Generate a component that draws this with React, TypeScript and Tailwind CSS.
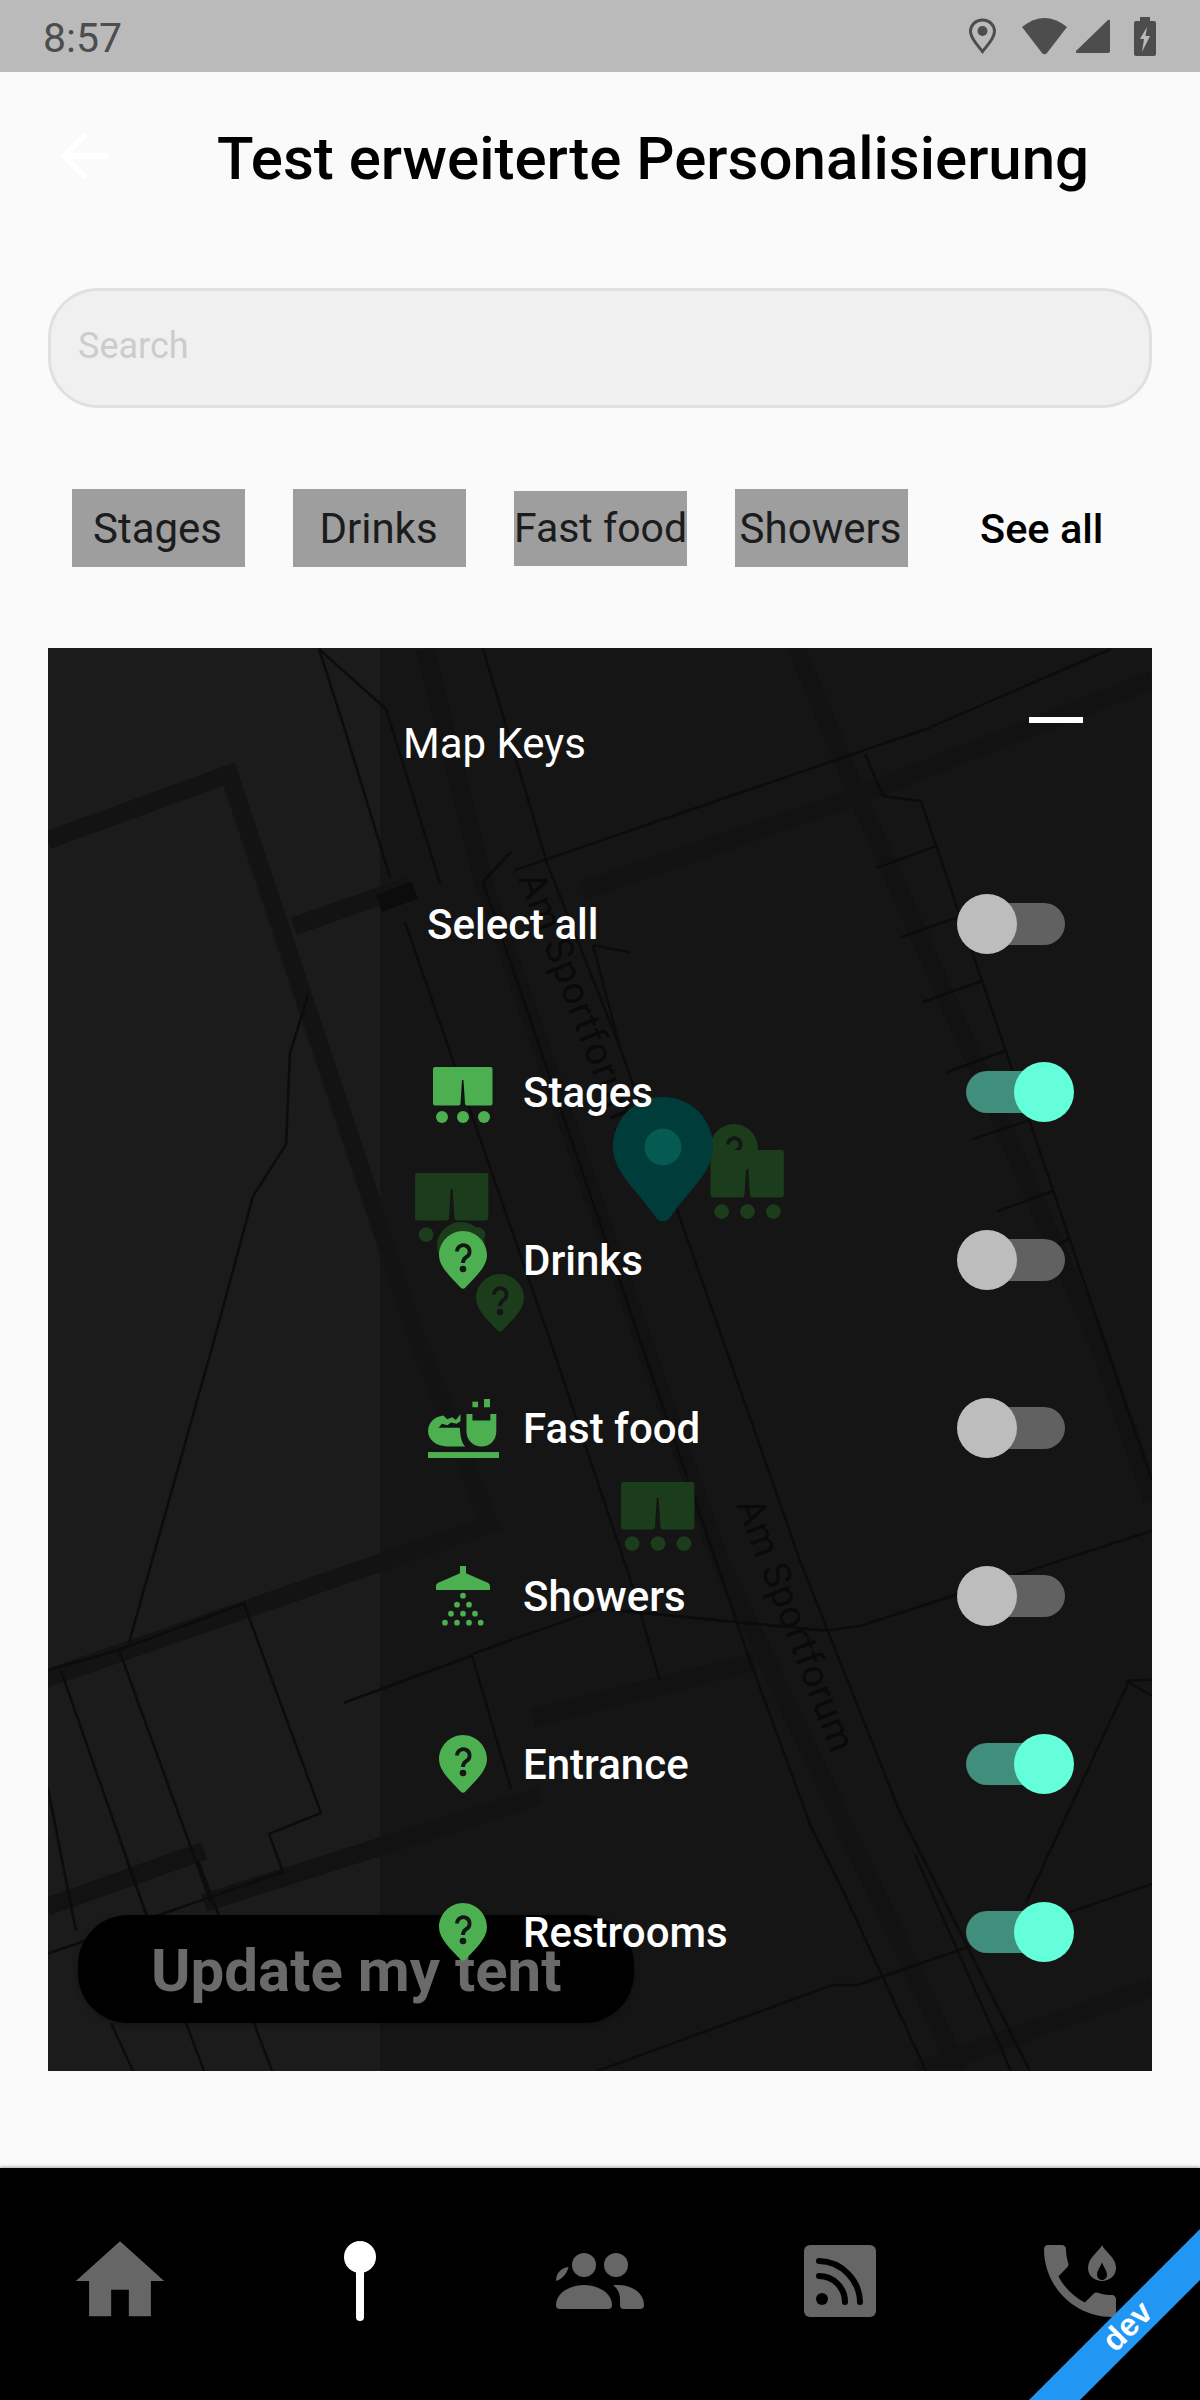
import React from "react";

const thin: string[] = [
  "319,649 386,709 440,883", "319,649 344,727 390,877", "483,649 547,863 620,1047 730,1360 800,1560 900,1812 1030,2070",
  "515,870 926,729 1111,649", "483,881 511,852", "865,754 883,796 921,801", "921,801 1104,1340 1152,1480",
  "876,868 936,846", "901,937 958,917", "922,1002 981,981", "947,1072 1004,1051", "972,1139 1029,1120", "997,1211 1052,1191", "1018,1269 1069,1238",
  "405,922 557,1360 633,1587 660,1680", "483,882 647,1360 750,1660 811,1826 844,1892 926,2070", "483,882 503,860", "593,945 630,952", "593,945 620,1047",
  "308,995 290,1053 286,1144 253,1196 214,1340 129,1642",
  "344,1702 472,1655 511,1788", "473,1653 600,1608 826,1630", "600,1608 826,1630 861,1625 1152,1530",
  "47,1670 119,1649 244,1603 321,1812 269,1833 283,1871 47,1953", "119,1649 211,1902", "61,1670 147,1916", "48,1788 76,1930",
  "111,2022 133,2070", "186,2022 204,2070", "254,2022 272,2070", "127,1860 147,1915", "198,1860 219,1915",
  "915,1854 1011,2070", "1129,1680 1026,1902", "1126,1680 1152,1695", "1126,1680 1152,1679",
  "597,2070 833,1984 858,1984 1152,1883",
];
const thickLeft: string[] = [
  "48,840 229,774 418,1340 490,1524 40,1680", "294,926 411,885",
];
const thickRight: string[] = [
  "583,890 833,805 1152,680",
  "425,649 483,881 720,1560 960,2070", "797,649 854,787 1097,1340 1152,1500",
  "204,1902 540,1795", "533,1717 754,1661", "1152,1986 918,2070", "47,1906 204,1850",
];

function MapLayer() {
  return (
    <svg className="absolute inset-0 h-full w-full" viewBox="48 648 1104 1422" preserveAspectRatio="none">
      <rect x="48" y="648" width="332" height="1422" fill="#1b1b1b" />
      <rect x="380" y="648" width="772" height="1422" fill="#151515" />
      {thickRight.map((p) => (
        <polyline key={p} points={p} fill="none" stroke="#121212" strokeWidth="18" />
      ))}
      {thickLeft.map((p) => (
        <polyline key={p} points={p} fill="none" stroke="#131313" strokeWidth="18" />
      ))}
      <line x1="379" y1="903" x2="415" y2="890" stroke="#0c0c0c" strokeWidth="18" />
      {thin.map((p) => (
        <polyline key={p} points={p} fill="none" stroke="#0c0c0c" strokeWidth="2.500" />
      ))}
      <text transform="translate(518,878) rotate(69)" fontFamily="Roboto, sans-serif" fontSize="38" letterSpacing="1" fill="#0a0a0a">Am Sportforum</text>
      <text transform="translate(736,1504) rotate(69)" fontFamily="Roboto, sans-serif" fontSize="38" letterSpacing="0.5" fill="#0a0a0a">Am Sportforum</text>
    </svg>
  );
}

function StageIcon({ className, color }: { className: string; color: string }) {
  return (
    <svg className={className} viewBox="0 0 60 56" fill={color}>
      <path d="M2 0H57.5a2 2 0 0 1 2 2V36.5a2 2 0 0 1-2 2H34a2 2 0 0 1-2-2L30.5 13H29L27.5 36.5a2 2 0 0 1-2 2H2a2 2 0 0 1-2-2V2a2 2 0 0 1 2-2z" />
      <circle cx="9" cy="50" r="6" />
      <circle cx="30" cy="50" r="6" />
      <circle cx="51" cy="50" r="6" />
    </svg>
  );
}

function QuestionPin({ className, color, mark }: { className: string; color: string; mark: string }) {
  return (
    <svg className={className} viewBox="0 0 48 58">
      <path fill={color} d="M24 0C37 0 48 11 48 24C48 36 36 46 26 57Q24 58.5 22 57C12 46 0 36 0 24C0 11 11 0 24 0Z" />
      <path fill="none" stroke={mark} strokeWidth="3.8" d="M18 20.5a6.3 6.3 0 1 1 9.5 5.4c-2.400 1.500-3.500 2.900-3.500 6" />
      <circle cx="24" cy="38" r="3.300" fill={mark} />
    </svg>
  );
}

function FoodIcon() {
  return (
    <svg className="h-[59px] w-[71px]" viewBox="22 27 214 178" fill="#4caf50">
      <rect x="22" y="187" width="214" height="18" />
      <rect x="156" y="35" width="17" height="17" />
      <rect x="191" y="27" width="18" height="25" />
      <path d="M138 72H156V92H210V72H228V125C228 153 207 170 184 170C160 170 138 153 138 125Z" />
      <path d="M22 125C22 100 40 80 68 77L80 88L95 82L106 90L120 72V94L108 102L92 98L80 106L64 102L54 114H118C119 138 123 160 134 170H80C48 170 22 150 22 125Z" />
    </svg>
  );
}

function ShowerIcon() {
  const dots = [[249, 709], [231, 736], [267, 736], [213, 763], [249, 763], [285, 763], [195, 790], [231, 790], [267, 790], [302, 790]];
  return (
    <svg className="h-[60px] w-[54px]" viewBox="168 620 162 180" fill="#4caf50">
      <path d="M240 620H258V642L318 668Q330 672 330 680V692H168V680Q168 672 180 668L240 642Z" />
      {dots.map(([x, y]) => (
        <circle key={`${x}-${y}`} cx={x} cy={y} r="8.500" />
      ))}
    </svg>
  );
}

function Toggle({ on }: { on: boolean }) {
  return (
    <div className="relative h-[60px] w-[117px]">
      <div className={`absolute left-[9px] top-[9px] h-[42px] w-[99px] rounded-full ${on ? "bg-[#3f8f7c]" : "bg-[#616161]"}`} />
      <div className={`absolute top-0 h-[60px] w-[60px] rounded-full ${on ? "left-[57px] bg-[#64ffda]" : "left-0 bg-[#bdbdbd]"}`} />
    </div>
  );
}

function KeyRow({ icon, label, on }: { icon: React.ReactNode; label: string; on: boolean }) {
  return (
    <div className="flex h-[168px] items-center justify-between">
      <div className="flex items-center gap-[24px]">
        <div className="flex w-[72px] justify-center">{icon}</div>
        <span className="text-[42px] font-medium text-white">{label}</span>
      </div>
      <Toggle on={on} />
    </div>
  );
}

const stageI = <StageIcon className="h-[56px] w-[60px] translate-y-[3px]" color="#4caf50" />;
const pinI = <QuestionPin className="h-[58px] w-[48px]" color="#4caf50" mark="#161616" />;

function Chip({ label, small }: { label: string; small?: boolean }) {
  return (
    <div className={`flex w-[173px] items-center justify-center whitespace-nowrap bg-[#9e9e9e] text-[#1c1c1c] ${small ? "h-[75px] pt-[2px] text-[41px]" : "h-[78px] pr-[2px] text-[42px]"}`}>
      {label}
    </div>
  );
}

export default function App() {
  return (
    <div className="relative flex h-[2400px] w-[1200px] flex-col overflow-hidden bg-[#fafafa] font-['Roboto',sans-serif]">
      {/* status bar */}
      <div className="flex h-[72px] shrink-0 items-center justify-between bg-[#bababa] pl-[43px] pr-[44px] text-[#4d4d4d]">
        <span className="pt-[5px] text-[41px] leading-none">8:57</span>
        <div className="flex items-center">
          <svg className="h-[36px] w-[27px]" viewBox="0 0 27 36" fill="none">
            <path stroke="#4d4d4d" strokeWidth="3" d="M13.500 2C20.500 2 25.500 7 25.500 13.500C25.500 20.500 18.500 27 13.500 33.500C8.500 27 1.500 20.500 1.500 13.500C1.500 7 6.500 2 13.500 2Z" />
            <circle cx="13.500" cy="13" r="5" fill="#4d4d4d" />
          </svg>
          <svg className="ml-[26px] h-[37px] w-[45px]" viewBox="0 0 45 37" fill="#4d4d4d">
            <path d="M0 9Q22.500 -9 45 9L25 35Q22.500 37.500 20 35Z" />
          </svg>
          <svg className="ml-[9px] h-[34px] w-[34px]" viewBox="0 0 34 34" fill="#4d4d4d">
            <path d="M0 32L32 1Q34 0 34 2V32Q34 34 32 34H2Q-1 34 0 32Z" />
          </svg>
          <svg className="ml-[24px] h-[39px] w-[22px]" viewBox="0 0 22 39">
            <path fill="#4d4d4d" d="M6 0H16V4H20Q22 4 22 6V37Q22 39 20 39H2Q0 39 0 37V6Q0 4 2 4H6Z" />
            <path fill="#bababa" d="M13 10L6 22H10L8 35L16 19H11.500Z" />
          </svg>
        </div>
      </div>

      {/* header */}
      <div className="flex h-[168px] shrink-0 items-center">
        <svg className="ml-[48px] h-[72px] w-[72px]" viewBox="0 0 24 24" fill="#ffffff">
          <path d="M20 11H7.830l5.590-5.590L12 4l-8 8 8 8 1.410-1.410L7.830 13H20v-2z" />
        </svg>
        <h1 className="ml-[97px] whitespace-nowrap pt-[6px] text-[60px] font-medium leading-none text-black">Test erweiterte Personalisierung</h1>
      </div>

      {/* search */}
      <div className="ml-[48px] mt-[48px] flex h-[120px] w-[1104px] shrink-0 items-center rounded-[50px] border-[3px] border-[#e0e0e0] bg-[#f0f0f0] pb-[4px] pl-[27px] text-[36px] text-[#cccccc]">
        Search
      </div>

      {/* chips */}
      <div className="ml-[72px] mt-[81px] flex h-[78px] shrink-0 items-center gap-[48px]">
        <Chip label="Stages" />
        <Chip label="Drinks" />
        <Chip label="Fast food" small />
        <Chip label="Showers" />
        <span className="ml-[24px] whitespace-nowrap pt-[2px] text-[41.5px] font-medium text-black">See all</span>
      </div>

      {/* map */}
      <div className="relative ml-[48px] mt-[81px] h-[1423px] w-[1104px] shrink-0 overflow-hidden">
        <MapLayer />

        {/* markers on the map */}
        <QuestionPin className="absolute left-[389px] top-[574px] h-[58px] w-[48px]" color="#1b3d1c" mark="#161616" />
        <StageIcon className="absolute left-[367px] top-[525px] h-[69px] w-[74px]" color="#1b3d1c" />
        <QuestionPin className="absolute left-[428px] top-[626px] h-[58px] w-[48px]" color="#1b3d1c" mark="#161616" />
        <QuestionPin className="absolute left-[662px] top-[476px] h-[58px] w-[48px]" color="#1b3d1c" mark="#161616" />
        <StageIcon className="absolute left-[662px] top-[502px] h-[69px] w-[75px]" color="#1b3d1c" />
        <StageIcon className="absolute left-[573px] top-[834px] h-[69px] w-[74px]" color="#1b3d1c" />
        <svg className="absolute left-[565px] top-[449px] h-[125px] w-[100px]" viewBox="0 0 100 125">
          <path fill="#003c3a" d="M50 0C78 0 100 22 100 50C100 76 76 92 56 122Q50 127 44 122C24 92 0 76 0 50C0 22 22 0 50 0Z" />
          <circle cx="50" cy="50" r="18.500" fill="#055a52" />
        </svg>

        {/* button */}
        <div className="absolute left-[30px] top-[1267px] flex h-[108px] w-[556px] items-center rounded-[50px] bg-black pl-[73px] pt-[4px] shadow-[0_2px_6px_rgba(0,0,0,0.25)]">
          <span className="whitespace-nowrap text-[60px] font-bold text-[#6a6a6a]">Update my tent</span>
        </div>

        {/* keys panel */}
        <div className="relative">
          <div className="relative h-[192px]">
            <span className="absolute left-[355px] top-[66px] whitespace-nowrap text-[42px] leading-[60px] text-white">Map Keys</span>
            <div className="absolute left-[981px] top-[69px] h-[6px] w-[54px] bg-white" />
          </div>
          <div className="ml-[379px] mr-[78px]">
            <div className="flex h-[168px] items-center justify-between">
              <span className="text-[42px] font-medium text-white">Select all</span>
              <Toggle on={false} />
            </div>
            <KeyRow icon={stageI} label="Stages" on />
            <KeyRow icon={pinI} label="Drinks" on={false} />
            <KeyRow icon={<FoodIcon />} label="Fast food" on={false} />
            <KeyRow icon={<ShowerIcon />} label="Showers" on={false} />
            <KeyRow icon={pinI} label="Entrance" on />
            <KeyRow icon={pinI} label="Restrooms" on />
          </div>
        </div>
      </div>

      {/* bottom nav */}
      <div className="absolute bottom-0 left-0 grid h-[232px] w-full grid-cols-5 bg-black shadow-[0_-1px_3px_rgba(0,0,0,0.35)]">
        <div className="flex h-[226px] items-center justify-center">
          <svg className="h-[106px] w-[106px]" viewBox="0 0 24 24" fill="#666666">
            <path d="M10 20v-6h4v6h5v-8h3L12 3 2 12h3v8z" />
          </svg>
        </div>
        <div className="flex h-[226px] items-center justify-center">
          <svg className="h-[80px] w-[32px]" viewBox="0 0 32 80" fill="#ffffff">
            <circle cx="16" cy="16" r="16" />
            <rect x="12" y="24" width="8" height="56" rx="4" />
          </svg>
        </div>
        <div className="flex h-[226px] items-center justify-center">
          <svg className="h-[56px] w-[88px]" viewBox="0 0 88 56" fill="#666666">
            <circle cx="28" cy="12" r="12" />
            <circle cx="60" cy="12" r="12" />
            <path d="M0 28C0 20 5 15 12.500 14C11 20 7 26 0 28Z" />
            <path d="M0 52C0 40 14 32 28 32C42 32 56 40 56 52a4 4 0 0 1-4 4H4a4 4 0 0 1-4-4Z" />
            <path d="M57 32H62C76 32 88 40 88 52a4 4 0 0 1-4 4H68a4 4 0 0 1-4-4V46C64 40 61 35 57 32Z" />
          </svg>
        </div>
        <div className="flex h-[226px] items-center justify-center">
          <svg className="h-[72px] w-[72px]" viewBox="0 0 72 72">
            <rect width="72" height="72" rx="6" fill="#666666" />
            <circle cx="18" cy="54" r="6" fill="#000000" />
            <path d="M15 16A42 42 0 0 1 56 57M15 31A26 26 0 0 1 41 57" fill="none" stroke="#000000" strokeWidth="6" strokeLinecap="round" />
          </svg>
        </div>
        <div className="flex h-[226px] items-center justify-center">
          <svg className="h-[96px] w-[96px]" viewBox="0 0 24 24" fill="#666666">
            <path d="M6.620 10.790c1.440 2.830 3.760 5.140 6.590 6.590l2.200-2.200c.27-.27.67-.36 1.020-.24 1.120.37 2.330.57 3.570.57.55 0 1 .45 1 1V20c0 .55-.45 1-1 1-9.390 0-17-7.610-17-17 0-.55.45-1 1-1h3.500c.55 0 1 .45 1 1 0 1.250.2 2.450.57 3.570.11.35.03.74-.25 1.020l-2.200 2.200z" />
            <path d="M17.500 3C18 4.500 21 6 21 8.750C21 10.750 19.250 12 17.500 12C15.750 12 14 10.750 14 8.750C14 6 17 4.500 17.500 3Z" />
            <path fill="#000000" d="M17.500 7.300C17.750 8.300 18.750 9.300 18.750 10.500C18.750 11.250 18 11.750 17.500 11.750C17 11.750 16.250 11.250 16.250 10.500C16.250 9.300 17.250 8.300 17.500 7.300Z" />
          </svg>
        </div>
      </div>

      {/* dev ribbon */}
      <svg className="absolute bottom-0 right-0 h-[171px] w-[171px]" viewBox="0 0 171 171" fill="#2196f3">
        <path d="M0 171L171 0V51L51 171Z" />
      </svg>
      <span className="absolute left-[1097px] top-[2307px] w-[60px] -rotate-45 text-center font-['Liberation_Sans',sans-serif] text-[32px] font-bold leading-[38px] text-white">dev</span>
    </div>
  );
}
